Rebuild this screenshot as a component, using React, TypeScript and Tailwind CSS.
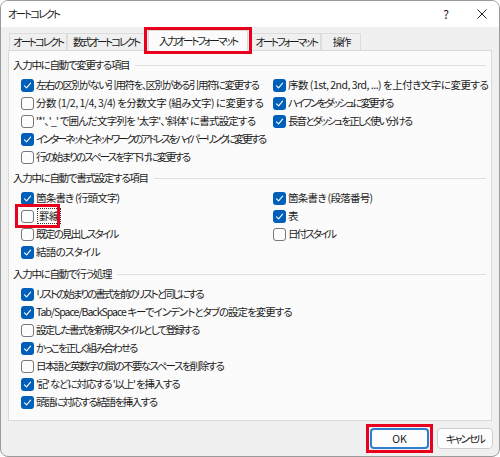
import type { ReactNode } from "react";

// tr: per-label letter spacing so each line keeps the dialog's narrow UI-font width
type Item = { label: string; checked: boolean; tr: string; outlined?: boolean };

const typingReplace: { left: Item[]; right: Item[] } = {
  left: [
    { label: "左右の区別がない引用符を、区別がある引用符に変更する", checked: true, tr: "tracking-[-1.5px]" },
    { label: "分数 (1/2, 1/4, 3/4) を分数文字 (組み文字) に変更する", checked: false, tr: "tracking-[-0.5px]" },
    { label: "'*'、'_' で囲んだ文字列を '太字'、'斜体' に書式設定する", checked: false, tr: "tracking-[-0.8px]" },
    { label: "インターネットとネットワークのアドレスをハイパーリンクに変更する", checked: true, tr: "tracking-[-2.3px]" },
    { label: "行の始まりのスペースを字下げに変更する", checked: false, tr: "tracking-[-1.9px]" },
  ],
  right: [
    { label: "序数 (1st, 2nd, 3rd, ...) を上付き文字に変更する", checked: true, tr: "tracking-[-0.5px]" },
    { label: "ハイフンをダッシュに変更する", checked: true, tr: "tracking-[-2.1px]" },
    { label: "長音とダッシュを正しく使い分ける", checked: true, tr: "tracking-[-1.9px]" },
  ],
};

const typingFormat: { left: Item[]; right: Item[] } = {
  left: [
    { label: "箇条書き (行頭文字)", checked: true, tr: "tracking-[-0.8px]" },
    { label: "罫線", checked: false, tr: "tracking-[-0.5px]", outlined: true },
    { label: "既定の見出しスタイル", checked: false, tr: "tracking-[-1.7px]" },
    { label: "結語のスタイル", checked: true, tr: "tracking-[-0.7px]" },
  ],
  right: [
    { label: "箇条書き (段落番号)", checked: true, tr: "tracking-[-0.7px]" },
    { label: "表", checked: true, tr: "tracking-[-0.5px]" },
    { label: "日付スタイル", checked: false, tr: "tracking-[-1.9px]" },
  ],
};

const typingActions: Item[] = [
  { label: "リストの始まりの書式を前のリストと同じにする", checked: true, tr: "tracking-[-2px]" },
  { label: "Tab/Space/BackSpace キーでインデントとタブの設定を変更する", checked: true, tr: "tracking-[-1px]" },
  { label: "設定した書式を新規スタイルとして登録する", checked: false, tr: "tracking-[-1.7px]" },
  { label: "かっこを正しく組み合わせる", checked: true, tr: "tracking-[-1.9px]" },
  { label: "日本語と英数字の間の不要なスペースを削除する", checked: false, tr: "tracking-[-1.6px]" },
  { label: "'記' などに対応する '以上' を挿入する", checked: true, tr: "tracking-[-1.2px]" },
  { label: "頭語に対応する結語を挿入する", checked: true, tr: "tracking-[-1.5px]" },
];

const tabs = [
  { label: "オートコレクト", w: "w-[58px]" },
  { label: "数式オートコレクト", w: "w-[78px]" },
  { label: "入力オートフォーマット", w: "w-[100px]", active: true },
  { label: "オートフォーマット", w: "w-[70px]" },
  { label: "操作", w: "w-[40px]" },
];

function Box({ checked }: { checked: boolean }) {
  if (checked) {
    return (
      <span className="flex h-[13px] w-[13px] shrink-0 items-center justify-center rounded-[3px] bg-[#005fb8]">
        <svg width="9" height="9" viewBox="0 0 9 9" fill="none">
          <path d="M1.5 4.8 3.6 6.8 7.6 2.2" stroke="#fff" strokeWidth="1.1" strokeLinecap="round" strokeLinejoin="round" />
        </svg>
      </span>
    );
  }
  return <span className="h-[13px] w-[13px] shrink-0 rounded-[3px] border border-[#777] bg-[#fcfcfc]" />;
}

function Check({ item }: { item: Item }) {
  const row = (
    <div className="flex h-[18px] items-center gap-[2px] whitespace-nowrap">
      <Box checked={item.checked} />
      {item.outlined ? (
        <span className={`${item.tr} ml-[1px] border border-dotted border-[#333] px-[1px] leading-[14px]`}>{item.label}</span>
      ) : (
        <span className={item.tr}>{item.label}</span>
      )}
    </div>
  );
  if (!item.outlined) return row;
  return (
    <div className="relative">
      {row}
      <div className="pointer-events-none absolute left-[-6px] top-[-3px] h-[24px] w-[45px] border-[3px] border-[#e8001c]" />
    </div>
  );
}

function Section({ title, tr, className = "", children }: { title: string; tr: string; className?: string; children: ReactNode }) {
  return (
    <div className={className}>
      <div className="mb-[2px] flex h-[18px] items-center gap-[6px] pl-[4px] pr-[5px]">
        <span className={`${tr} whitespace-nowrap`}>{title}</span>
        <div className="h-px flex-1 bg-[#dedede]" />
      </div>
      <div className="pl-[12px]">{children}</div>
    </div>
  );
}

function TwoCols({ left, right }: { left: Item[]; right: Item[] }) {
  return (
    <div className="flex">
      <div className="w-[252px]">
        {left.map((it) => (
          <Check key={it.label} item={it} />
        ))}
      </div>
      <div>
        {right.map((it) => (
          <Check key={it.label} item={it} />
        ))}
      </div>
    </div>
  );
}

export default function App() {
  return (
    <div className="h-[457px] w-[500px] bg-white">
      <div
        className="flex h-[457px] w-[500px] flex-col overflow-hidden rounded-[8px] border border-[#9a9a9a] bg-[#f0f0f0] text-[10.5px] text-[#1b1b1b] [font-feature-settings:'palt']"
        style={{ fontFamily: '"Noto Sans CJK JP", "Noto Sans", sans-serif' }}
      >
        {/* title bar */}
        <div className="flex h-[26px] shrink-0 items-center bg-white pl-[7px] pr-[12px]">
          <span className="tracking-[-2px]">オートコレクト</span>
          <span className="ml-auto mr-[28px] text-[12px]">?</span>
          <svg width="10" height="10" viewBox="0 0 10 10" stroke="#222" strokeWidth="1">
            <path d="M0.5 0.5 9.5 9.5M9.5 0.5 0.5 9.5" />
          </svg>
        </div>

        {/* tab strip */}
        <div className="flex h-[23px] shrink-0 items-end px-[8px] tracking-[-2.2px]">
          {tabs.map((t) =>
            t.active ? (
              <div key={t.label} className="relative mx-[3px] h-[20px]">
                <div
                  className={`${t.w} relative z-10 -mb-px flex h-[21px] items-center justify-center whitespace-nowrap border border-b-0 border-[#d9d9d9] bg-[#fbfbfb]`}
                >
                  {t.label}
                </div>
                <div className="pointer-events-none absolute left-[-4px] top-[-3px] z-20 h-[27px] w-[108px] border-[3px] border-[#e8001c]" />
              </div>
            ) : (
              <div
                key={t.label}
                className={`${t.w} flex h-[17px] items-center justify-center whitespace-nowrap border border-b-0 border-[#dcdcdc] bg-[#f0f0f0]`}
              >
                {t.label}
              </div>
            ),
          )}
        </div>

        {/* tab page */}
        <div className="mx-[7px] h-[371px] shrink-0 border border-[#d9d9d9] bg-[#fbfbfb] pt-[5px]">
          <Section title="入力中に自動で変更する項目" tr="tracking-[-1.3px]">
            <TwoCols left={typingReplace.left} right={typingReplace.right} />
          </Section>
          <Section title="入力中に自動で書式設定する項目" tr="tracking-[-1.3px]" className="mt-[3px]">
            <TwoCols left={typingFormat.left} right={typingFormat.right} />
          </Section>
          <Section title="入力中に自動で行う処理" tr="tracking-[-1.3px]" className="mt-[4px]">
            {typingActions.map((it) => (
              <Check key={it.label} item={it} />
            ))}
          </Section>
        </div>

        {/* buttons */}
        <div className="flex flex-1 items-center justify-end gap-[8px] pr-[6px]">
          <div className="relative">
            <button className="h-[21px] w-[59px] rounded-[4px] border-2 border-[#2f7fd0] bg-[#fdfdfd]">OK</button>
            <div className="pointer-events-none absolute left-[-4px] top-[-4px] h-[29px] w-[67px] border-[3px] border-[#e8001c]" />
          </div>
          <button className="h-[21px] w-[56px] rounded-[4px] border border-[#cfcfcf] bg-[#fdfdfd] tracking-[-1.9px]">キャンセル</button>
        </div>
      </div>
    </div>
  );
}
